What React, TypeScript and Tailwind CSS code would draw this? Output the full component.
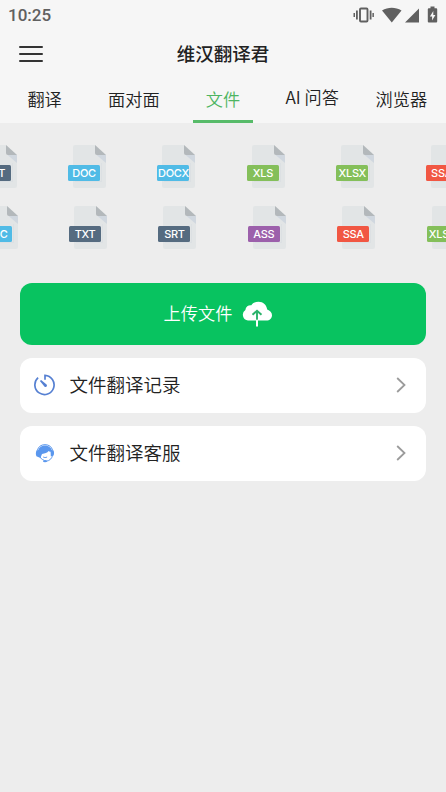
import React, { useState } from 'react';

interface FileType {
  name: string;
  color: string;
}

const TXT: FileType = { name: 'TXT', color: 'bg-[#556b80]' };
const SRT: FileType = { name: 'SRT', color: 'bg-[#556b80]' };
const DOC: FileType = { name: 'DOC', color: 'bg-[#50bbe6]' };
const DOCX: FileType = { name: 'DOCX', color: 'bg-[#50bbe6]' };
const XLS: FileType = { name: 'XLS', color: 'bg-[#84bf5a]' };
const XLSX: FileType = { name: 'XLSX', color: 'bg-[#84bf5a]' };
const ASS: FileType = { name: 'ASS', color: 'bg-[#9c60ab]' };
const SSA: FileType = { name: 'SSA', color: 'bg-[#f15743]' };

const firstRow = [TXT, DOC, DOCX, XLS, XLSX, SSA];
const secondRow = [DOC, TXT, SRT, ASS, SSA, XLSX];

const tabs = ['翻译', '面对面', '文件', 'AI 问答', '浏览器'];

const FileIcon = ({ file }: { file: FileType }) => (
  <div className="relative w-[39px] h-[44px] mr-[50.4px] shrink-0">
    <svg className="block ml-[5px]" width="34" height="44" viewBox="0 0 34 44">
      <path d="M2 0h20l11 10v31a2 2 0 0 1-2 2H2a2 2 0 0 1-2-2V2a2 2 0 0 1 2-2z" fill="#e2e5e6" />
      <path d="M23 9.500L33 18V10z" fill="#d0d7df" />
      <path d="M22 0l11 10h-9a2 2 0 0 1-2-2z" fill="#b3b8bb" />
      <path d="M2 36h26V18h1v19H2z" fill="#dce0e3" />
    </svg>
    <span
      className={`absolute left-0 top-5 w-8 h-4 rounded-[1.5px] flex items-center justify-center text-white text-[11px] tracking-[-0.25px] leading-none font-medium font-[Inter,sans-serif] ${file.color}`}
    >
      {file.name}
    </span>
  </div>
);

const StatusBar = () => (
  <div className="h-8 pl-2 pr-[7px] flex items-center justify-between text-[#606060]">
    <span className="-mt-px font-[Roboto,sans-serif] font-medium text-[17px] leading-none">10:25</span>
    <svg width="86" height="18" viewBox="0 0 86 18" fill="currentColor" className="-mt-0.5">
      <rect x="7" y="2.500" width="7.500" height="13" rx="1" fill="none" stroke="currentColor" strokeWidth="1.900" />
      <path d="M3 4.500h1.800v9H3zM.5 7h1.500v4H.5zM16.700 4.500h1.800v9h-1.800zM19.400 7h1.500v4h-1.500z" />
      <path d="M29 4.500C35 .9 42.500.9 48.500 4.500L38.800 16.500z" />
      <path d="M66 2.500V16.500H52z" />
      <path d="M77.500.5h4v1.800h1.700a1 1 0 0 1 1 1v12.200a1 1 0 0 1-1 1h-7.400a1 1 0 0 1-1-1V3.300a1 1 0 0 1 1-1h1.700z" />
      <path d="M80.300 5l-3.400 5.400h2.200v4l3.300-5.500h-2.100z" fill="#f6f6f6" />
    </svg>
  </div>
);

const HistoryIcon = () => (
  <svg width="22" height="22" viewBox="0 0 22 22" fill="none" stroke="#5680d2" strokeWidth="1.700">
    <path d="M4.100 3.700A9.600 9.600 0 1 0 11 1.300V5.800" />
    <path d="M5.900 6.900l1.200-.9 5.500 4.500a1.500 1.500 0 0 1-2 2.200z" fill="#5680d2" stroke="none" />
  </svg>
);

const ServiceIcon = () => (
  <svg width="22" height="22" viewBox="0 0 22 22" fill="none">
    <path d="M3.300 8.500a8 8 0 0 1 15.400 0" stroke="#5a97ee" strokeWidth="1" />
    <path d="M4.300 8C5.200 5 7.800 3.500 11 3.500S16.800 5 17.700 8l1.900.6c.6 1.600.6 3.300 0 4.900l-2.800.7-.2-4.400c-.9.100-1.600-.2-2-.8-1.300 1.800-3.600 2.300-6.600 3L6.800 15l-.3 1-4.100-1.700c-.8-1.900-.6-3.900 0-5.700z" fill="#5a97ee" />
    <path d="M6 14.700c.8 1.800 2 2.900 3.800 3.300M9.200 15c1.300.7 2.600.7 3.900 0M18.600 13c-.6 3.600-3 5.800-6.600 6.300" stroke="#5a97ee" strokeWidth="1" />
    <ellipse cx="11" cy="19.200" rx="2" ry="1.100" fill="#5a97ee" />
  </svg>
);

const CloudIcon = () => (
  <svg width="30" height="26" viewBox="0 0 30 26">
    <path d="M6 19.500a5.700 5.700 0 0 1-2.600-10.400A5.200 5.200 0 0 1 9.300 4.200C11 1.900 13.500.8 16.500.8c4.700 0 8.200 3.300 8.700 7.800C28 9.500 30 11.700 30 14.200c0 3-2.300 5.300-5.600 5.300z" fill="#fff" />
    <path d="M10.500 13.800L15 9.700l4.500 4.100M15 10v9.500" fill="none" stroke="#2bb36b" strokeWidth="1.900" />
    <path d="M15 19.500v5.200" stroke="#fff" strokeWidth="2" strokeLinecap="round" />
  </svg>
);

const MenuItem = ({ icon, label }: { icon: React.ReactNode; label: string }) => (
  <button className="w-full h-[55.3px] pl-3.5 pr-5 flex items-center rounded-xl bg-white text-[#222] text-left">
    {icon}
    <span className="ml-[13.5px] -mt-0.5 flex-1 text-[18.5px] leading-none font-[350]">{label}</span>
    <svg width="10" height="16" viewBox="0 0 10 16" fill="none" stroke="#9b9b9b" strokeWidth="1.800" className="-mt-px">
      <path d="M1.200 1L8.500 8l-7.300 7" />
    </svg>
  </button>
);

const App = () => {
  const [activeTab, setActiveTab] = useState('文件');

  return (
    <div className="w-full h-screen overflow-hidden flex flex-col bg-[#ededed] font-['Noto_Sans_CJK_SC',sans-serif]">
      <header className="h-[122.5px] shrink-0 flex flex-col bg-[#f6f6f6]">
        <StatusBar />
        <div className="h-11 px-[19px] flex items-center">
          <button className="w-6 flex flex-col gap-[5.3px]">
            <span className="h-0.5 w-full rounded-full bg-[#333]" />
            <span className="h-0.5 w-full rounded-full bg-[#333]" />
            <span className="h-0.5 w-full rounded-full bg-[#333]" />
          </button>
          <h1 className="flex-1 mr-6 -mt-px text-center text-[18.5px] leading-none font-medium text-[#222]">维汉翻译君</h1>
        </div>
        <nav className="flex-1 grid grid-cols-5 text-[17.2px] leading-none font-[350] text-[#222]">
          {tabs.map((tab) => (
            <button
              key={tab}
              onClick={() => setActiveTab(tab)}
              className={`flex flex-col items-center justify-between whitespace-nowrap ${tab === 'AI 问答' ? 'pt-3' : 'pt-[14px]'} ${tab === activeTab ? 'text-[#4db562]' : ''}`}
            >
              <span>{tab}</span>
              {tab === activeTab && <span className="w-[60px] h-[2.5px] bg-[#57bb69]" />}
            </button>
          ))}
        </nav>
      </header>

      <section className="pt-[22.5px] flex flex-col gap-[17px] overflow-hidden">
        <div className="flex -ml-[21.3px]">
          {firstRow.map((file) => (
            <FileIcon key={file.name} file={file} />
          ))}
        </div>
        <div className="flex -ml-[20.3px]">
          {secondRow.map((file) => (
            <FileIcon key={file.name} file={file} />
          ))}
        </div>
      </section>

      <main className="px-5 pt-[33px] flex flex-col gap-[12.7px]">
        <button className="w-full h-[62px] pr-[10px] flex items-center justify-center gap-[10px] rounded-xl bg-[#08c360] text-white text-[17.2px] leading-none font-[350]">
          <span className="-mt-0.5">上传文件</span>
          <CloudIcon />
        </button>
        <MenuItem icon={<HistoryIcon />} label="文件翻译记录" />
        <MenuItem icon={<ServiceIcon />} label="文件翻译客服" />
      </main>
    </div>
  );
};

export default App;
